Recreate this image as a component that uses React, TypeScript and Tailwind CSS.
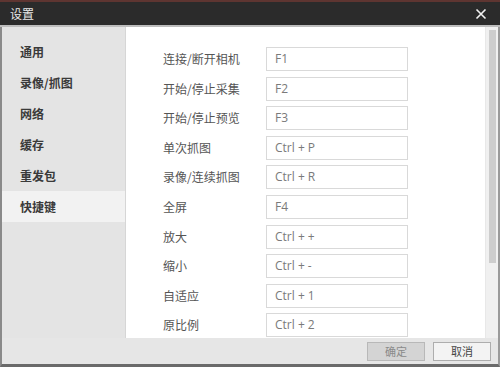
import React from "react";

const menu = ["通用", "录像/抓图", "网络", "缓存", "重发包", "快捷键"];
const rows: [string, string][] = [
  ["连接/断开相机", "F1"],
  ["开始/停止采集", "F2"],
  ["开始/停止预览", "F3"],
  ["单次抓图", "Ctrl + P"],
  ["录像/连续抓图", "Ctrl + R"],
  ["全屏", "F4"],
  ["放大", "Ctrl + +"],
  ["缩小", "Ctrl + -"],
  ["自适应", "Ctrl + 1"],
  ["原比例", "Ctrl + 2"],
];

export default function App() {
  return (
    <div
      className="w-[500px] h-[367px] flex flex-col overflow-hidden bg-[#e6e6e6]"
      style={{ fontFamily: '"Noto Sans CJK SC", "Noto Sans", sans-serif' }}
    >
      <div className="h-[2px] bg-[#5e3531]" />
      <div className="h-[23px] bg-[#2b2b2b] flex items-center justify-between pl-[10px] pr-[13px]">
        <span className="text-[12px] text-[#e8e8e8] leading-none">设置</span>
        <svg width="12" height="12" viewBox="0 0 12 12">
          <path d="M1.5 1.5 L10.5 10.5 M10.5 1.5 L1.5 10.5" stroke="#f2f2f2" strokeWidth="1.6" />
        </svg>
      </div>
      <div className="h-[2px] bg-[#bdbdbd]" />
      <div className="flex-1 flex flex-col border-l-[2px] border-l-[#8a8a8a] border-r-[2px] border-r-[#9a9a9a] border-b-[3px] border-b-[#6a6a6a]">
        <div className="h-[311px] flex">
          <div className="w-[124px] pt-[9px] border-r border-r-[#d6d6d6] bg-[#e4e4e4]">
            {menu.map((m, i) => (
              <div
                key={m}
                className={`h-[31px] flex items-center pl-[18px] text-[12px] font-bold text-[#3a3a3a] ${
                  i === 5 ? "bg-[#f2f2f2]" : ""
                }`}
              >
                {m}
              </div>
            ))}
          </div>
          <div className="flex-1 bg-white overflow-hidden pt-[20px] pl-[37px] flex flex-col gap-[5.6px]">
            {rows.map(([l, v]) => (
              <div key={l} className="flex items-center h-[24px] shrink-0">
                <span className="w-[103px] text-[12px] text-[#555]">{l}</span>
                <div
                  className="w-[142px] h-[24px] border border-[#d9d9d9] flex items-center pl-[8px] text-[12px] text-[#7a7a7a]"
                  style={{ fontFamily: '"Open Sans", "Noto Sans", sans-serif' }}
                >
                  {v}
                </div>
              </div>
            ))}
          </div>
          <div className="w-[13px] bg-[#f0f0f0] border-l border-l-[#e8e8e8] pt-[3px] pl-[3px]">
            <div className="w-[7px] h-[233px] bg-[#cdcdcd]" />
          </div>
        </div>
        <div className="flex-1 flex items-center justify-end gap-[8px] pr-[7px]">
          <div className="w-[58px] h-[19px] bg-[#d4d4d4] border border-[#b8b8b8] flex items-center justify-center text-[11px] text-[#8a8a8a]">
            确定
          </div>
          <div className="w-[58px] h-[19px] bg-[#f3f3f3] border border-[#adadad] flex items-center justify-center text-[11px] text-[#444]">
            取消
          </div>
        </div>
      </div>
    </div>
  );
}
